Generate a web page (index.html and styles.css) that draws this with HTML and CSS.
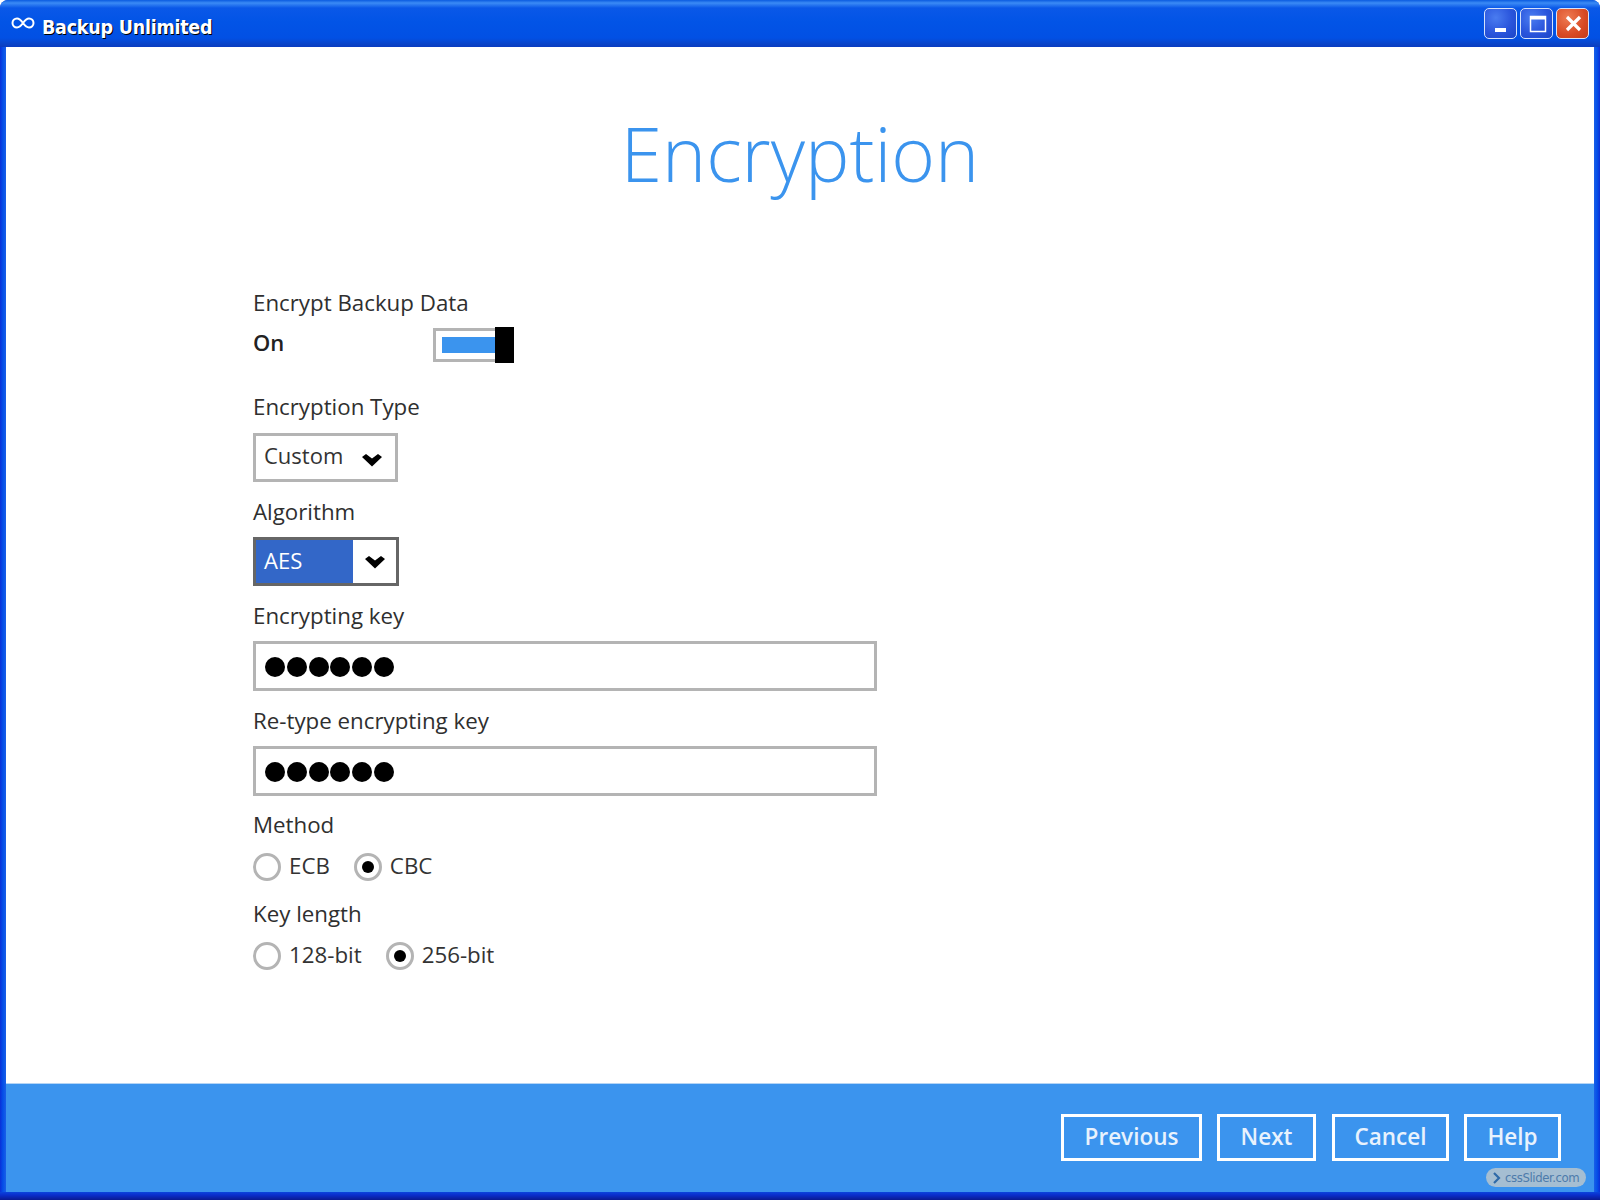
FILE: index.html
```html
<!DOCTYPE html>
<html lang="en">
<head>
<meta charset="utf-8">
<title>Backup Unlimited</title>
<link rel="stylesheet" href="styles.css">
</head>
<body>
<div class="window">
  <header class="titlebar">
    <svg class="app-icon" width="24" height="12" viewBox="0 0 24 12"><path d="M12 6C9.500 2.500 7.800 1.500 6 1.500a4.500 4.500 0 0 0 0 9c1.800 0 3.500-1 6-4.500s4.200-4.500 6-4.500a4.500 4.500 0 0 1 0 9c-1.800 0-3.500-1-6-4.500z" fill="none" stroke="#fff" stroke-width="2"/></svg>
    <span class="app-title">Backup Unlimited</span>
    <div class="win-buttons">
      <div class="win-btn"><svg width="26" height="26" viewBox="0 0 26 26"><rect x="7" y="18" width="11" height="4" fill="#fff"/></svg></div>
      <div class="win-btn"><svg width="26" height="26" viewBox="0 0 26 26"><rect x="6.500" y="6.500" width="15" height="15" fill="none" stroke="#fff" stroke-width="1.500"/><rect x="6" y="6" width="16" height="3.500" fill="#fff"/></svg></div>
      <div class="win-btn close"><svg width="26" height="26" viewBox="0 0 26 26"><path d="M7 7l13 13M20 7L7 20" stroke="#fff" stroke-width="3.200" fill="none"/></svg></div>
    </div>
  </header>
  <main class="content">
    <h1 class="heading">Encryption</h1>
    <form class="form">
      <div class="label">Encrypt Backup Data</div>
      <div class="toggle-row">
        <span class="on">On</span>
        <div class="toggle"><div class="toggle-fill"></div><div class="toggle-knob"></div></div>
      </div>
      <div class="label label-type">Encryption Type</div>
      <div class="select select-type"><span class="select-text">Custom</span><svg class="chev" width="20" height="14" viewBox="0 0 20 14"><path d="M0 4l4-3 6 4.500L16 1l4 3-10 9.500z"/></svg></div>
      <div class="label">Algorithm</div>
      <div class="select select-alg"><span class="alg-text">AES</span><span class="alg-arrow"><svg class="chev" width="20" height="14" viewBox="0 0 20 14"><path d="M0 4l4-3 6 4.500L16 1l4 3-10 9.500z"/></svg></span></div>
      <div class="label">Encrypting key</div>
      <div class="input"><i></i><i></i><i></i><i></i><i></i><i></i></div>
      <div class="label">Re-type encrypting key</div>
      <div class="input"><i></i><i></i><i></i><i></i><i></i><i></i></div>
      <div class="label label-method">Method</div>
      <div class="radios">
        <span class="radio"></span><span class="radio-text">ECB</span>
        <span class="radio checked"></span><span class="radio-text">CBC</span>
      </div>
      <div class="label">Key length</div>
      <div class="radios">
        <span class="radio"></span><span class="radio-text">128-bit</span>
        <span class="radio checked"></span><span class="radio-text">256-bit</span>
      </div>
    </form>
  </main>
  <footer class="footer">
    <div class="btn-row">
      <div class="btn b-prev">Previous</div>
      <div class="btn b-next">Next</div>
      <div class="btn b-cancel">Cancel</div>
      <div class="btn b-help">Help</div>
    </div>
    <div class="badge"><svg width="10" height="12" viewBox="0 0 10 12"><path d="M2 1l5 5-5 5" fill="none" stroke="#2f6aa8" stroke-width="2.200"/></svg><span>cssSlider.com</span></div>
  </footer>
</div>
</body>
</html>
```
FILE: styles.css
```css
* { box-sizing: border-box; }
html, body { margin: 0; padding: 0; }
body { width: 1600px; height: 1200px; overflow: hidden; background: #fff; font-family: "Open Sans", sans-serif; color: #2b2b2b; }
.window {
  width: 1600px; height: 1200px; display: flex; flex-direction: column; padding-bottom: 8px;
  border-radius: 8px 8px 0 0; overflow: hidden;
  background: linear-gradient(0deg, #0a1a90 0, #0a2ecc 5px, #0a44dc 8px, transparent 8px),
              linear-gradient(90deg, #0a2fd8 0, #0550e8 3px, #1a5fe8 6px, transparent 6px),
              linear-gradient(270deg, #0a2fd8 0, #0550e8 3px, #1a5fe8 6px, transparent 6px);
  background-color: #0a44dc;
}
.titlebar {
  height: 47px; flex: none; display: flex; align-items: center; padding: 0 11px 0 11px;
  background: linear-gradient(180deg, #0a5be0 0, #3b8bf5 3px, #0a58e8 8px, #0254e6 22px, #0250e4 38px, #0a44c8 44px, #0a3cc0 47px);
}
.app-icon { margin-right: 7px; margin-top: -1px; }
.app-title { color: #fff; font-family: "DejaVu Sans Condensed", "DejaVu Sans", sans-serif; font-weight: 700; font-size: 19.500px; letter-spacing: -.25px; text-shadow: 1px 1px 0 #000; margin-top: 7px; }
.win-buttons { margin-left: auto; display: flex; gap: 3px; margin-top: -1px; }
.win-btn {
  width: 33px; height: 31px; border: 1.500px solid #d5e2fb; border-radius: 5px; display: flex; align-items: center; justify-content: center;
  background: radial-gradient(circle at 35% 30%, #4a7cf0 0, #2a55dc 55%, #1b45c8 100%);
}
.win-btn.close { background: radial-gradient(circle at 35% 30%, #ee7b52 0, #d84a24 60%, #c23a1a 100%); }
.content { flex: 1; margin: 0 6px; background: #fff; padding: 0 0 0 247px; }
.heading { margin: 56px 0 0; width: 1094px; text-align: center; font-weight: 300; font-size: 74.700px; line-height: 100px; color: #3b94ee; }
.form { display: flex; flex-direction: column; margin-top: 86px; }
.label { font-size: 22.300px; line-height: 28px; height: 28px; color: #2f2f2f; margin-bottom: 11px; }
.label-type { margin-bottom: 12px; }
.label-method { margin-top: -1px; }
.toggle-row { display: flex; align-items: center; height: 34px; margin-bottom: 31px; }
.on { width: 180px; font-size: 22px; font-weight: 600; color: #222; margin-top: -7px; }
.toggle { width: 81px; height: 34px; position: relative; display: flex; align-items: center; }
.toggle::before { content: ""; position: absolute; left: 0; top: 0; right: 6px; bottom: 0; border: 3px solid #b4b4b4; }
.toggle-fill { position: relative; margin-left: 9px; width: 53px; height: 16px; background: #3b94ee; }
.toggle-knob { position: relative; width: 19px; height: 36px; background: #000; }
.select { height: 49px; border: 3px solid #b4b4b4; display: flex; align-items: center; font-size: 22px; margin-bottom: 16px; }
.select-type { width: 145px; padding-left: 8px; }
.select-text { color: #333; margin-top: -5px; }
.chev { display: block; fill: #000; }
.select-type .chev { margin-left: 19px; margin-top: 4px; }
.select-alg { width: 146px; border-color: #666; background: #fff; }
.alg-text { flex: none; width: 97px; height: 100%; background: #3367c8; color: #fff; padding: 0 0 4px 8px; display: flex; align-items: center; }
.alg-arrow { flex: 1; display: flex; justify-content: center; padding-top: 1px; }
.input { width: 624px; height: 50px; border: 3px solid #b4b4b4; display: flex; align-items: center; gap: 1.800px; padding: 2px 0 0 9px; margin-bottom: 16px; }
.input i { display: block; width: 20px; height: 20px; border-radius: 50%; background: #000; }
.radios { display: flex; align-items: center; height: 30px; margin-bottom: 18px; font-size: 22.300px; margin-top: 2px; }
.radio { width: 28px; height: 28px; border: 3px solid #b4b4b4; border-radius: 50%; position: relative; flex: none; }
.radio.checked::after { content: ""; position: absolute; left: 5px; top: 5px; width: 12px; height: 12px; border-radius: 50%; background: #000; }
.radio-text { margin: -4px 24px 0 8px; color: #333; }
.footer {
  flex: none; height: 109px; margin: 0 6px; background: #3b94ee; border-top: 1px solid #b4d4f5;
  position: relative; padding-top: 30px;
}
.btn-row { display: flex; justify-content: flex-end; gap: 15px; padding-right: 33px; }
.btn { height: 47px; border: 3px solid #fff; color: #e8f2fd; font-size: 22.500px; font-weight: 600; display: flex; align-items: center; justify-content: center; padding-bottom: 3px; }
.b-prev { width: 141px; } .b-next { width: 99px; } .b-cancel { width: 117px; margin-left: 1px; } .b-help { width: 97px; }
.badge { position: absolute; right: 8px; bottom: 5px; width: 100px; height: 19px; border-radius: 10px; background: #a5bed2; display: flex; align-items: center; gap: 3px; padding-left: 6px; font-family: "DejaVu Sans Condensed", "DejaVu Sans", sans-serif; font-size: 13px; color: #4d7bab; }
.badge span { letter-spacing: -.4px; }
```
